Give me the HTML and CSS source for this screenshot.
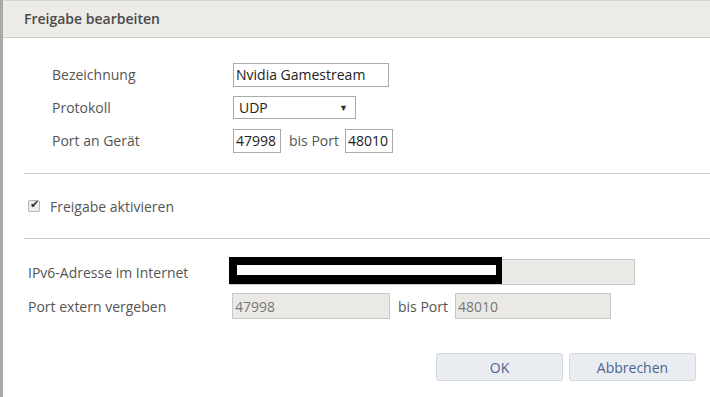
FILE: index.html
```html
<!DOCTYPE html>
<html lang="de">
<head>
    <meta charset="UTF-8">
    <title>Freigabe bearbeiten</title>
    <link rel="stylesheet" href="styles.css">
</head>
<body>
<div class="page">
    <div class="backdrop"></div>

    <div class="dialog">
        <div class="dialog-head">Freigabe bearbeiten</div>

        <div class="device">
            <div class="row">
                <span class="label">Bezeichnung</span>
                <input type="text" class="field name" value="Nvidia Gamestream">
            </div>
            <div class="row">
                <span class="label">Protokoll</span>
                <div class="select">UDP <span class="arrow">▼</span></div>
            </div>
            <div class="row">
                <span class="label">Port an Gerät</span>
                <div class="ports">
                    <input type="text" class="field port" value="47998">
                    <span class="bis">bis Port</span>
                    <input type="text" class="field port" value="48010">
                </div>
            </div>
        </div>

        <hr class="sep">

        <label class="check"><input type="checkbox" checked> Freigabe aktivieren</label>

        <hr class="sep">

        <div class="external">
            <div class="row">
                <span class="label">IPv6-Adresse im Internet</span>
                <div class="ipv6">
                    <input type="text" class="field off wide" disabled>
                    <!-- geschwärzte Adresse -->
                    <div class="redact"><div class="redact-bar"></div></div>
                </div>
            </div>
            <div class="row">
                <span class="label">Port extern vergeben</span>
                <div class="ports">
                    <input type="text" class="field off extport" value="47998" disabled>
                    <span class="bis">bis Port</span>
                    <input type="text" class="field off extport" value="48010" disabled>
                </div>
            </div>
        </div>

        <div class="buttons">
            <button>OK</button>
            <button>Abbrechen</button>
        </div>
    </div>
</div>
</body>
</html>
```

FILE: styles.css
```css
body {
    margin: 0;
    font-family: "Open Sans", Arial, sans-serif;
    font-size: 14px;
    color: #555;
    background: #fff;
}
.page {
    display: flex;
    height: 397px;
    overflow: hidden;
}
.backdrop {
    width: 3px;
    background: #a9a9a9;
}
.dialog {
    flex: 1;
    background: #fff;
}
.dialog-head {
    height: 36px;
    line-height: 36px;
    padding-left: 21px;
    background: #ecebe7;
    border-top: 1px solid #d6d5d0;
    border-bottom: 1px solid #cfcdc8;
    font-size: 14px;
    font-weight: 600;
    color: #4a4a4a;
}
.device {
    padding: 20px 0 0 49px;
}
.row {
    display: flex;
    align-items: center;
    height: 33px;
}
.device .label {
    width: 181px;
}
.field {
    box-sizing: border-box;
    height: 24px;
    padding: 0 2px;
    border: 1px solid #aaa;
    font-family: inherit;
    font-size: 14px;
    color: #222;
    background: #fff;
}
.name {
    width: 156px;
}
.select {
    box-sizing: border-box;
    width: 123px;
    height: 23px;
    line-height: 21px;
    padding: 0 5px;
    border: 1px solid #aaa;
    font-size: 14px;
    color: #222;
    display: flex;
    justify-content: space-between;
}
.arrow {
    font-size: 9px;
    color: #333;
    margin-right: 2px;
}
.ports {
    display: flex;
    align-items: center;
}
.port {
    width: 48px;
}
.bis {
    margin: 0 6px 0 8px;
}
.sep {
    margin: 0 0 0 21px;
    border: none;
    border-top: 1px solid #ccc;
}
.device + .sep {
    margin-top: 16px;
}
.check {
    display: flex;
    align-items: center;
    height: 64px;
    padding-left: 22px;
    font-size: 14px;
}
.check input {
    appearance: none;
    box-sizing: border-box;
    margin: 0 10px 0 3px;
    width: 12px;
    height: 12px;
    border: 1px solid #b5b5b5;
    border-radius: 2px;
    background: #eee;
    position: relative;
}
.check input:checked::after {
    content: "✔";
    position: absolute;
    left: 1px;
    top: -3px;
    font-size: 11px;
    color: #333;
}
.external {
    padding: 16px 0 0 25px;
}
.external .row {
    height: 34px;
}
.external .label {
    width: 202px;
}
.off {
    background: #ebe9e5;
    border-color: #c8c8c8;
    color: #777;
    height: 26px;
}
.wide {
    width: 405px;
}
.extport {
    width: 158px;
}
.external .ports {
    margin-left: 2px;
}
.external .bis {
    margin: 0 7px 0 8px;
}
.external .extport + .bis + .extport {
    width: 156px;
}
.ipv6 {
    position: relative;
}
.redact {
    position: absolute;
    left: -1px;
    top: -2px;
    width: 273px;
    height: 27px;
    box-sizing: border-box;
    background: #000;
    padding: 8px 6px 9px 8px;
}
.redact-bar {
    background: #fff;
    height: 10px;
}
.buttons {
    display: flex;
    justify-content: flex-end;
    gap: 6px;
    padding: 30px 14px 0 0;
}
.buttons button {
    width: 127px;
    height: 28px;
    background: #e9edf2;
    border: 1px solid #d3d8de;
    border-radius: 3px;
    font-family: inherit;
    font-size: 14px;
    color: #4a6591;
    cursor: pointer;
}
```
